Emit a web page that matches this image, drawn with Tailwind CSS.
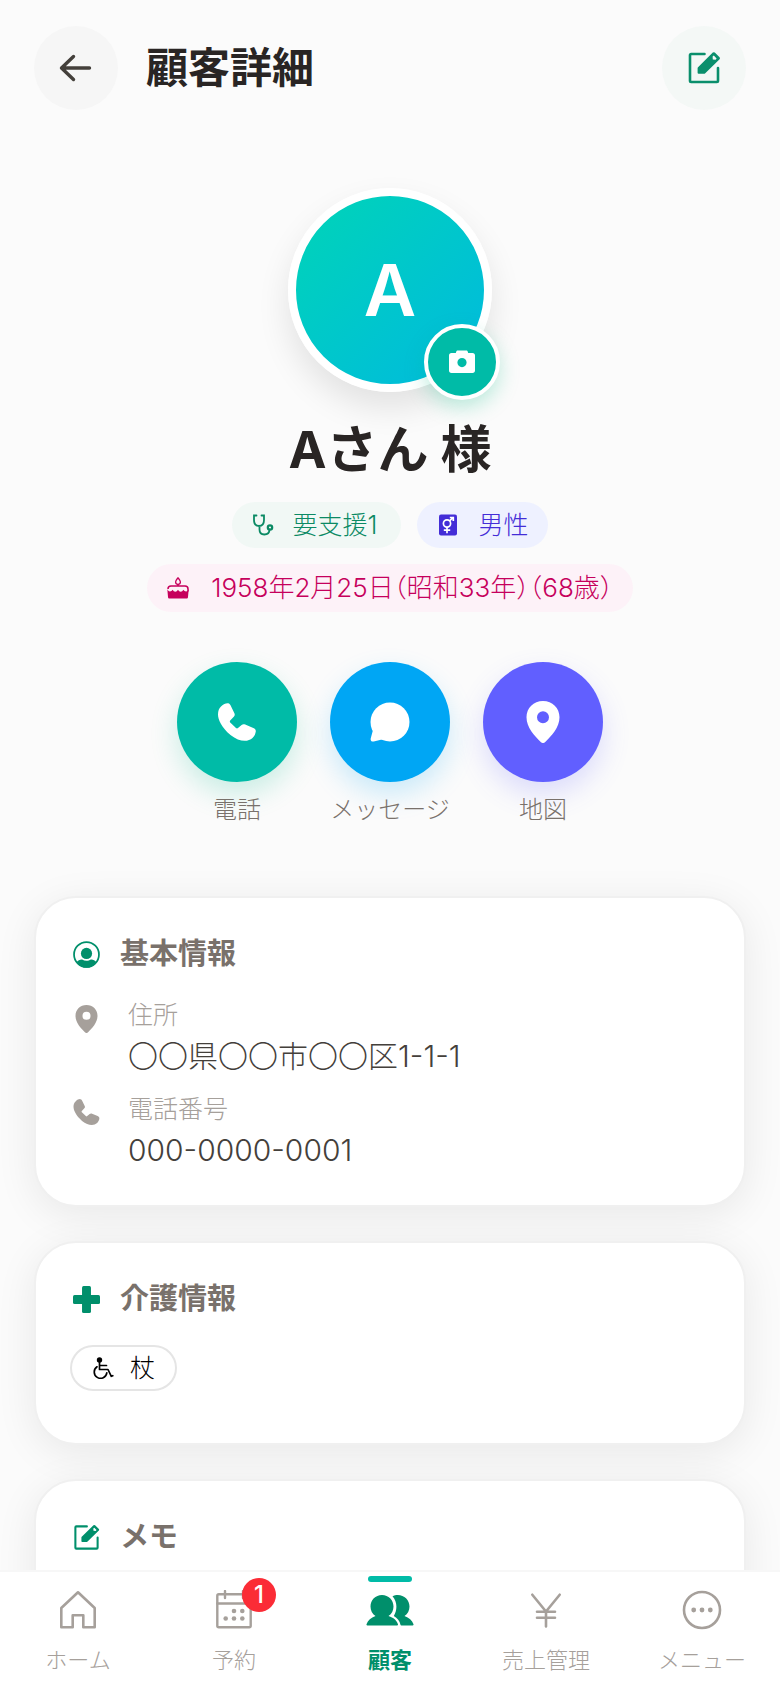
<!DOCTYPE html>
<html lang="ja">
<head>
  <meta charset="UTF-8" />
  <meta name="viewport" content="width=device-width, initial-scale=1.0"/>
  <title>顧客詳細</title>
  <!-- Tailwind CSS CDN -->
  <script src="https://cdn.jsdelivr.net/npm/@tailwindcss/browser@4"></script>
</head>

<body class="h-screen flex flex-col overflow-hidden bg-[#fbfbfb] font-['Inter','Noto_Sans_CJK_JP',sans-serif] font-light text-stone-800">

  <!-- Shared icons -->
  <svg class="hidden">
    <symbol id="icon-edit" viewBox="0 0 34 34">
      <path d="M17.5 3H4.2Q3 3 3 4.2V29.8Q3 31 4.2 31H29.8Q31 31 31 29.8V17" fill="none" stroke="currentColor" stroke-width="2.6" stroke-linecap="round"/>
      <path fill="currentColor" fill-rule="evenodd" d="M11 16.2 25.8 1.6Q26.8.8 27.8 1.6L32.6 6.3Q33.4 7.3 32.6 8.2L18 22.4Q17.6 22.8 17 22.8H11.6Q10.6 22.8 10.6 21.8V17.2Q10.6 16.6 11 16.2ZM25.6 5.6 25.8 8.4 28.6 8.8 29.6 7.6 26.8 4.6Z"/>
    </symbol>
    <symbol id="icon-phone" viewBox="0 0 38 38">
      <path fill="currentColor" d="M3 3.5C5.5 1 8 0 10 .2c1.6.1 2.2 1.3 3 3l3.4 7c.6 1.5.4 2.4-.6 3.5l-3.6 3.9c-.5.7-.5 1.2 0 1.9L18 25c.7.6 1.3.6 2 0l3.6-3c1.2-.9 2.1-1 3.6-.4l8.1 3.4c1.7.7 2.6 1.8 2.5 3.4-.2 2.2-1.4 4.6-3.3 6.6-5 4.5-13.500 3.7-22-3C3.5 24.5 0 16.5 0 11.5 0 8 1 5.3 3 3.5z"/>
    </symbol>
    <symbol id="icon-pin" viewBox="0 0 34 42">
      <path fill="currentColor" fill-rule="evenodd" d="M17 0C7.5 0 .5 7 .5 16.3c0 10 8 18.7 14.5 24.9 1.2 1.1 2.8 1.1 4 0 6.5-6.2 14.5-14.9 14.5-24.9C33.5 7 26.5 0 17 0zm0 10.3a6 6 0 1 1 0 12 6 6 0 0 1 0-12z"/>
    </symbol>
  </svg>

  <main class="flex-1 min-h-0 overflow-y-auto [scrollbar-width:none]">
    <header class="flex items-center px-[34px] pt-[26px]">
      <button aria-label="戻る" class="size-[84px] rounded-full bg-[#f6f6f6] flex items-center justify-center text-stone-700">
        <svg class="size-[34px]" viewBox="0 0 34 34" fill="none" stroke="currentColor" stroke-width="3.4" stroke-linecap="round" stroke-linejoin="round"><path d="M30.500 17H3M14.500 5.500 2.500 17 14.500 28.500"/></svg>
      </button>
      <h1 class="ml-7 text-[42px] leading-[56px] font-bold">顧客詳細</h1>
      <button aria-label="編集" class="ml-auto size-[84px] rounded-full bg-[#f4f8f6] flex items-center justify-center text-[#0a8f6c]">
        <svg class="size-[34px]"><use href="#icon-edit"/></svg>
      </button>
    </header>

    <!-- Profile -->
    <section class="flex flex-col items-center pt-[78px]">
      <div class="relative">
        <div class="size-[204px] rounded-full border-8 border-white bg-linear-to-br from-[#00d5b5] to-[#00b8e0] [background-origin:border-box] shadow-[0_16px_32px_rgba(0,0,0,0.1)] flex items-center justify-center text-white text-[72px] leading-none font-semibold">A</div>
        <button aria-label="写真を変更" class="absolute -right-2 -bottom-2 size-[76px] rounded-full border-4 border-white bg-[#00bba7] shadow-[0_8px_20px_rgba(0,187,130,0.25)] flex items-center justify-center text-white">
          <svg class="w-7 h-6" viewBox="0 0 28 24"><path fill="currentColor" fill-rule="evenodd" d="M9.8.5h8.4c.9 0 1.3.4 1.6 1.2l.4 1.3h4.3c1.6 0 2.5 1 2.5 2.5v15c0 1.6-.9 2.5-2.5 2.5h-21C1.9 23 1 22.1 1 20.5v-15C1 4 1.9 3 3.5 3h4.3l.4-1.3C8.5.9 8.9.5 9.8.5zM14 8a4.600 4.600 0 1 0 0 9.200A4.600 4.600 0 0 0 14 8z"/></svg>
        </button>
      </div>
      <h2 class="mt-[26px] text-[51px] leading-[64px] font-bold">Aさん 様</h2>

      <div class="mt-5 px-9 flex flex-wrap justify-center gap-4 max-w-[600px] text-[25px] leading-[30px]">
        <span class="flex items-center h-[46px] rounded-full bg-[#f1f8f5] text-[#0b8a64] pl-5 pr-6 gap-[19px]">
          <svg class="size-[22px]" viewBox="0 0 22 22" fill="none" stroke="currentColor" stroke-width="1.8" stroke-linecap="round"><path d="M4.5 1.5H2V6c0 4 2 6 5 6s5-2 5-6V1.5H9.5M7.5 12v3.5c0 3.300 2 5 4.800 5 3 0 5.200-1.700 5.200-5"/><circle cx="18" cy="13.5" r="2.2" stroke-width="2.2"/></svg>
          要支援1
        </span>
        <span class="flex items-center h-[46px] rounded-full bg-[#eef1ff] text-[#432dd7] px-5 gap-[19px]">
          <svg class="size-[22px]" viewBox="0 0 22 22"><rect x="2" y="0.5" width="18" height="21" rx="2" fill="currentColor"/><g fill="none" stroke="#fff" stroke-width="1.7"><circle cx="10" cy="9.5" r="3.6"/><path d="M12.6 6.9 16 3.5M12.8 3.5H16.3V7M10 13v6.3M6.8 16.2h6.4"/></g></svg>
          男性
        </span>
        <span class="flex items-center h-12 rounded-full bg-[#fdf2f8] text-[#c6005c] px-5 gap-[22px] text-[26px] whitespace-nowrap [font-feature-settings:'halt']">
          <svg class="size-[22px] shrink-0" viewBox="0 0 22 22"><path d="M11 .8c1.3 1.7 2.4 2.9 2.4 4.1a2.400 2.400 0 0 1-4.800 0C8.600 3.700 9.700 2.500 11 .8z" fill="none" stroke="currentColor" stroke-width="1.3"/><path d="M11 7v2M1 12c0-2 1-3 3-3h14c2 0 3 1 3 3v2.5" fill="none" stroke="currentColor" stroke-width="1.5"/><path fill="currentColor" d="M.3 12c.8 3 3.8 3.2 5.3.8 1.400 2.600 4 2.600 5.400 0 1.400 2.600 4 2.600 5.400 0 1.500 2.400 4.500 2.200 5.300-.8l-.7 8c-.1 1-.6 1.500-1.600 1.500H2.600c-1 0-1.500-.5-1.600-1.500z"/></svg>
          1958年2月25日（昭和33年）（68歳）
        </span>
      </div>

      <!-- Quick actions -->
      <div class="mt-[50px] flex gap-[33px] text-[24px] leading-8 text-stone-500">
        <a href="#" class="w-[120px] flex flex-col items-center gap-3 whitespace-nowrap">
          <span class="size-[120px] rounded-full bg-[#00bba7] shadow-[0_12px_28px_rgba(0,187,140,0.2)] flex items-center justify-center text-white"><svg class="size-[38px]"><use href="#icon-phone"/></svg></span>
          電話
        </a>
        <a href="#" class="w-[120px] flex flex-col items-center gap-3 whitespace-nowrap">
          <span class="size-[120px] rounded-full bg-[#00a6f4] shadow-[0_12px_28px_rgba(0,166,244,0.2)] flex items-center justify-center text-white"><svg class="size-10" viewBox="0 0 40 40" fill="currentColor"><circle cx="20" cy="20" r="19.5"/><path d="M3 28 .7 36.5C.2 38.8 1.8 40 3.8 39.5L13 37.2z"/></svg></span>
          メッセージ
        </a>
        <a href="#" class="w-[120px] flex flex-col items-center gap-3 whitespace-nowrap">
          <span class="size-[120px] rounded-full bg-[#615fff] shadow-[0_12px_28px_rgba(97,95,255,0.2)] flex items-center justify-center text-white"><svg class="w-[34px] h-[42px]"><use href="#icon-pin"/></svg></span>
          地図
        </a>
      </div>
    </section>

    <!-- Info cards -->
    <div class="mt-[70px] px-[34px] pb-9 flex flex-col gap-[34px]">
      <section class="rounded-[42px] border-2 border-[#f0f0f0] bg-white shadow-[0_8px_40px_rgba(0,0,0,0.08)] px-[34px] pt-9 pb-8">
        <h3 class="flex items-center gap-5 pl-[3px] text-[29px] leading-10 font-bold text-stone-500">
          <svg class="size-[27px] text-[#008f6b]" viewBox="0 0 26 26"><circle cx="13" cy="13" r="12" fill="none" stroke="currentColor" stroke-width="1.7"/><circle cx="13" cy="12" r="5.4" fill="currentColor"/><path fill="currentColor" d="M3.5 20.5C5 18.6 7 17.6 8.8 17.9c2.4 1.6 6 1.6 8.4 0 1.8-.3 3.8.7 5.3 2.6C20.5 24 16.5 25.8 13 25.8S5.5 24 3.5 20.5z"/></svg>
          基本情報
        </h3>
        <dl class="mt-[23px] pl-[3px] flex flex-col gap-3">
          <div class="grid grid-cols-[27px_1fr] gap-x-7">
            <svg class="w-[27px] h-7 mt-2 row-span-2 text-[#a6a09b]"><use href="#icon-pin"/></svg>
            <dt class="text-[25px] leading-9 text-[#a6a09b]">住所</dt>
            <dd class="text-[30px] leading-[46px] text-stone-700">〇〇県〇〇市〇〇区1-1-1</dd>
          </div>
          <div class="grid grid-cols-[27px_1fr] gap-x-7">
            <svg class="w-[27px] h-[26px] mt-2 row-span-2 text-[#a6a09b]"><use href="#icon-phone"/></svg>
            <dt class="text-[25px] leading-9 text-[#a6a09b]">電話番号</dt>
            <dd class="text-[30px] leading-[46px] text-stone-700">000-0000-0001</dd>
          </div>
        </dl>
      </section>

      <section class="rounded-[42px] border-2 border-[#f0f0f0] bg-white shadow-[0_8px_40px_rgba(0,0,0,0.08)] px-[34px] pt-9 pb-[52px]">
        <h3 class="flex items-center gap-5 pl-[3px] text-[29px] leading-10 font-bold text-stone-500">
          <svg class="size-[27px] text-[#008f6b]" viewBox="0 0 26 26" fill="currentColor"><rect x="8.7" width="8.6" height="26" rx="1.5"/><rect y="8.7" width="26" height="8.6" rx="1.5"/></svg>
          介護情報
        </h3>
        <div class="mt-[26px] flex">
          <span class="flex items-center h-[46px] rounded-full border-2 border-[#e5e5e5] px-5 gap-4 text-[25px] leading-[30px] text-black">
            <svg class="size-[22px]" viewBox="0 0 22 22" fill="none" stroke="currentColor" stroke-width="1.7" stroke-linecap="round" stroke-linejoin="round"><circle cx="7.5" cy="3" r="2.7" fill="currentColor" stroke="none"/><path d="M7.5 5v7.5h8.5l3.3 6.8 1.5-.6M7.5 8.5h7M5 9.8a6.3 6.3 0 1 0 9.8 6"/></svg>
            杖
          </span>
        </div>
      </section>

      <section class="rounded-[42px] border-2 border-[#f0f0f0] bg-white shadow-[0_8px_40px_rgba(0,0,0,0.08)] px-[34px] pt-9 pb-20">
        <h3 class="flex items-center gap-5 pl-[3px] text-[29px] leading-10 font-bold text-stone-500">
          <svg class="size-[27px] text-[#008f6b]"><use href="#icon-edit"/></svg>
          メモ
        </h3>
      </section>
    </div>
  </main>

  <!-- Bottom tab bar -->
  <nav class="shrink-0 grid grid-cols-5 border-t-2 border-[#f7f7f7] bg-white pb-[14px] text-[22px] leading-7 text-[#a6a09b]">
    <a href="#" class="flex flex-col items-center gap-4 pt-[18px]">
      <svg class="size-10" viewBox="0 0 40 40" fill="none" stroke="currentColor" stroke-width="2.6" stroke-linejoin="round"><path d="M3.3 18 20 2.3 36.7 18V37.3H25.3V25.3H14.7V37.3H3.3z"/></svg>
      ホーム
    </a>
    <a href="#" class="relative flex flex-col items-center gap-4 pt-[18px]">
      <svg class="size-10" viewBox="0 0 40 40" fill="none" stroke="currentColor" stroke-width="2.4" stroke-linecap="round"><rect x="3.3" y="4.3" width="33.4" height="33" rx="1.5"/><path d="M3.3 13.5h33.4M11 1v7M29 1v7"/><g fill="currentColor" stroke="none"><circle cx="20" cy="21" r="2.3"/><circle cx="28.3" cy="21" r="2.3"/><circle cx="11.7" cy="28.5" r="2.3"/><circle cx="20" cy="28.5" r="2.3"/><circle cx="28.3" cy="28.5" r="2.3"/></g></svg>
      <span class="absolute left-1/2 ml-2 top-[6px] size-[34px] rounded-full bg-[#fb2c36] text-white text-[24px] leading-[34px] font-medium text-center">1</span>
      予約
    </a>
    <a href="#" aria-current="page" class="relative flex flex-col items-center gap-4 pt-[18px] font-bold text-[#008f6b]">
      <span class="absolute top-1 w-11 h-[6px] rounded-full bg-[#00bba7]"></span>
      <svg class="w-12 h-10" viewBox="0 0 48 40" fill="currentColor"><path d="M16 5c6.5 0 11.5 5 11.5 11.5 0 4-1.700 7.300-5 9.500 5 1.500 8.500 4.500 9.500 8.500.1.600-.2.900-.9.900H1.400c-.9 0-1.100-.5-.8-1.300C1.800 30.500 5 27.500 9.500 26c-3.300-2.200-5-5.500-5-9.500C4.500 10 9.500 5 16 5z"/><path d="M26.500 6.200C28 5.400 30 5 31.800 5c6.500 0 11.700 5 11.700 11.500 0 4-1.700 7.300-5 9.500 4.500 1.500 7.700 4.500 8.900 8.100.3.900.1 1.300-.8 1.300H35.400c-.6 0-.9-.3-1-.9-.6-3.500-3-6.500-6.600-8.500 1.700-2.800 2.600-6 2.600-9.500 0-4-1.400-7.600-3.900-10.300z"/></svg>
      顧客
    </a>
    <a href="#" class="flex flex-col items-center gap-4 pt-[18px]">
      <svg class="size-10" viewBox="0 0 40 40" fill="none" stroke="currentColor" stroke-width="2.6" stroke-linecap="round"><path d="M6.3 4.7 20 21.500 33.700 4.700M20 21.500V36.500M11 21.700h18M11 27.700h18"/></svg>
      売上管理
    </a>
    <a href="#" class="flex flex-col items-center gap-4 pt-[18px]">
      <svg class="size-10" viewBox="0 0 40 40"><circle cx="20" cy="20" r="18" fill="none" stroke="currentColor" stroke-width="2.6"/><g fill="currentColor"><circle cx="11.7" cy="20" r="2.4"/><circle cx="20" cy="20" r="2.4"/><circle cx="28.3" cy="20" r="2.4"/></g></svg>
      メニュー
    </a>
  </nav>

</body>
</html>
